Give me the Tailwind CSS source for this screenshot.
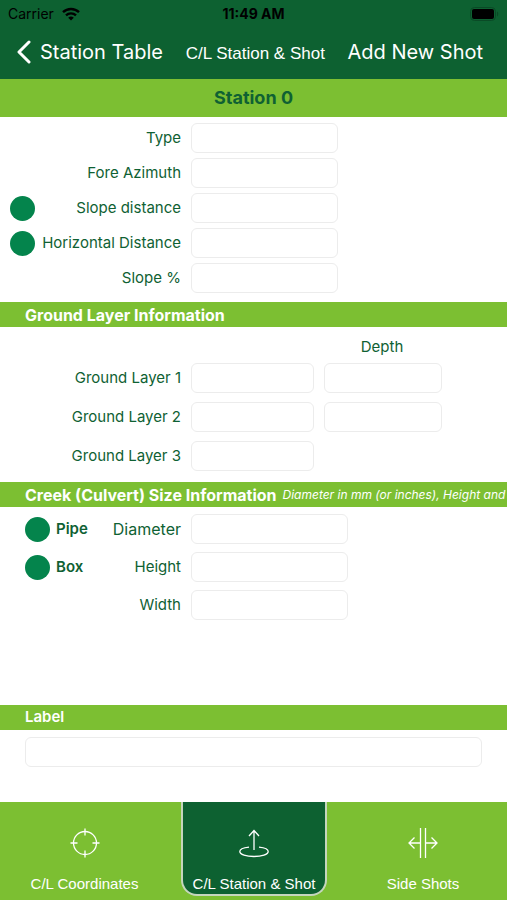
<!DOCTYPE html>
<html lang="en">
<head>
  <meta charset="UTF-8" />
  <meta name="viewport" content="width=device-width, initial-scale=1.0" />
  <title>C/L Station &amp; Shot</title>
  <script src="https://cdn.jsdelivr.net/npm/@tailwindcss/browser@4"></script>
</head>
<body class="min-h-screen flex flex-col bg-white text-[#0f6133] font-['Inter',sans-serif] text-[15px] overflow-x-hidden">

  <!-- Status bar + navigation -->
  <header class="bg-[#0d6131]">
    <div class="grid grid-cols-3 items-center h-7 pl-2 pr-2 text-sm leading-5 text-black">
      <div class="flex items-center gap-2">
        <span>Carrier</span>
        <svg class="w-[18px] h-[14px]" viewBox="0 0 18 14" fill="none" stroke="currentColor" stroke-width="2.4">
          <path d="M1 5.2a11.5 11.5 0 0 1 16 0" />
          <path d="M4 8.4a7.2 7.2 0 0 1 10 0" />
          <path d="M9 13.6L6.2 10.8a4 4 0 0 1 5.6 0z" fill="currentColor" stroke="none" />
        </svg>
      </div>
      <span class="text-center font-bold">11:49 AM</span>
      <svg class="w-[29px] h-[14px] justify-self-end" viewBox="0 0 29 14">
        <rect x="0.5" y="0.5" width="25" height="13" rx="4" fill="none" stroke="#0a4a26" />
        <rect x="2" y="2" width="22" height="10" rx="2" fill="#000" />
        <path d="M27 4.6c1.6.6 1.6 4.2 0 4.8z" fill="#0a4a26" />
      </svg>
    </div>
    <nav class="flex items-baseline justify-between h-[51px] pl-4 pr-6 pt-[10px] text-white">
      <a href="#" class="flex items-baseline gap-2 text-xl">
        <svg class="w-4 h-6 self-center" viewBox="0 0 16 24" fill="none" stroke="currentColor" stroke-width="3" stroke-linecap="round" stroke-linejoin="round">
          <path d="M13 2L3 12l10 10" />
        </svg>
        Station Table
      </a>
      <h1 class="font-['Liberation_Sans',sans-serif] text-[17px]">C/L Station &amp; Shot</h1>
      <button type="button" class="text-xl">Add New Shot</button>
    </nav>
  </header>

  <main class="flex-1">
    <h2 class="flex items-center justify-center h-[38px] bg-[#7cbf32] text-lg font-bold">Station 0</h2>

    <section class="flex flex-col gap-[5px] pt-[6px] pb-[9px]">
      <div class="flex items-center gap-[10px]">
        <label for="type" class="w-[181px] text-right">Type</label>
        <input id="type" type="text" class="w-[147px] h-[30px] px-2 rounded-md border border-[#ececec]" />
      </div>
      <div class="flex items-center gap-[10px]">
        <label for="azimuth" class="w-[181px] text-right">Fore Azimuth</label>
        <input id="azimuth" type="text" class="w-[147px] h-[30px] px-2 rounded-md border border-[#ececec]" />
      </div>
      <div class="flex items-center gap-[10px]">
        <div class="flex items-center justify-between w-[181px] pl-[10px]">
          <input type="radio" name="distance" aria-label="Use slope distance" class="appearance-none size-[25px] rounded-full bg-[#04844c]" />
          <label for="slopeDistance">Slope distance</label>
        </div>
        <input id="slopeDistance" type="text" class="w-[147px] h-[30px] px-2 rounded-md border border-[#ececec]" />
      </div>
      <div class="flex items-center gap-[10px]">
        <div class="flex items-center justify-between w-[181px] pl-[10px]">
          <input type="radio" name="distance" aria-label="Use horizontal distance" class="appearance-none size-[25px] rounded-full bg-[#04844c]" />
          <label for="horizontalDistance">Horizontal Distance</label>
        </div>
        <input id="horizontalDistance" type="text" class="w-[147px] h-[30px] px-2 rounded-md border border-[#ececec]" />
      </div>
      <div class="flex items-center gap-[10px]">
        <label for="slope" class="w-[181px] text-right">Slope %</label>
        <input id="slope" type="text" class="w-[147px] h-[30px] px-2 rounded-md border border-[#ececec]" />
      </div>
    </section>

    <h2 class="flex items-center h-[25px] pl-[25px] bg-[#7cbf32] text-white text-base font-bold">Ground Layer Information</h2>

    <section class="pt-[10px] pb-[11px]">
      <div class="w-[118px] ml-[323px] mb-[6px] text-center leading-5">Depth</div>
      <div class="flex flex-col gap-[9px]">
        <div class="flex items-center gap-[10px]">
          <label for="layer1" class="w-[181px] text-right">Ground Layer 1</label>
          <input id="layer1" type="text" class="w-[123px] h-[30px] px-2 rounded-md border border-[#ececec]" />
          <input type="text" aria-label="Ground Layer 1 depth" class="w-[118px] h-[30px] px-2 rounded-md border border-[#ececec]" />
        </div>
        <div class="flex items-center gap-[10px]">
          <label for="layer2" class="w-[181px] text-right">Ground Layer 2</label>
          <input id="layer2" type="text" class="w-[123px] h-[30px] px-2 rounded-md border border-[#ececec]" />
          <input type="text" aria-label="Ground Layer 2 depth" class="w-[118px] h-[30px] px-2 rounded-md border border-[#ececec]" />
        </div>
        <div class="flex items-center gap-[10px]">
          <label for="layer3" class="w-[181px] text-right">Ground Layer 3</label>
          <input id="layer3" type="text" class="w-[123px] h-[30px] px-2 rounded-md border border-[#ececec]" />
        </div>
      </div>
    </section>

    <h2 class="flex items-center gap-[6px] h-[25px] pl-[25px] bg-[#7cbf32] text-white text-base font-bold whitespace-nowrap overflow-hidden">
      Creek (Culvert) Size Information
      <span class="text-xs font-normal italic">Diameter in mm (or inches), Height and</span>
    </h2>

    <section class="flex flex-col gap-2 pt-[7px]">
      <div class="flex items-center gap-[10px]">
        <div class="flex items-center w-[181px] pl-[25px]">
          <input id="pipe" type="radio" name="culvert" class="appearance-none size-[25px] rounded-full bg-[#04844c]" />
          <label for="pipe" class="pl-[6px] font-semibold">Pipe</label>
          <label for="diameter" class="ml-auto text-base">Diameter</label>
        </div>
        <input id="diameter" type="text" class="w-[157px] h-[30px] px-2 rounded-md border border-[#ececec]" />
      </div>
      <div class="flex items-center gap-[10px]">
        <div class="flex items-center w-[181px] pl-[25px]">
          <input id="box" type="radio" name="culvert" class="appearance-none size-[25px] rounded-full bg-[#04844c]" />
          <label for="box" class="pl-[6px] font-semibold">Box</label>
          <label for="height" class="ml-auto">Height</label>
        </div>
        <input id="height" type="text" class="w-[157px] h-[30px] px-2 rounded-md border border-[#ececec]" />
      </div>
      <div class="flex items-center gap-[10px]">
        <label for="width" class="w-[181px] text-right">Width</label>
        <input id="width" type="text" class="w-[157px] h-[30px] px-2 rounded-md border border-[#ececec]" />
      </div>
    </section>

    <section class="mt-[85px]">
      <label for="label" class="flex items-center h-[25px] pl-[25px] bg-[#7cbf32] text-white font-semibold">Label</label>
      <div class="px-[25px] pt-[7px] pb-[35px]">
        <input id="label" type="text" class="block w-full h-[30px] px-2 rounded-md border border-[#ececec]" />
      </div>
    </section>
  </main>

  <!-- Tabs -->
  <nav class="grid grid-cols-[181fr_146fr_180fr] h-[98px] bg-[#7cbf32] text-white text-[15px] leading-5 font-['Liberation_Sans',sans-serif]">
    <a href="#" class="flex flex-col items-center pt-[26px] pr-3">
      <svg class="size-[30px]" viewBox="0 0 30 30" fill="none" stroke="currentColor" stroke-width="1.3">
        <circle cx="15" cy="15" r="11.5" />
        <path d="M15 0.5v7M15 22.5v7M0.5 15h7M22.5 15h7" />
      </svg>
      <span class="pt-4">C/L Coordinates</span>
    </a>
    <a href="#" aria-current="page" class="flex flex-col items-center h-[94px] pt-[26px] rounded-b-2xl border-2 border-t-0 border-[#c5d6bd] bg-[#0d6131]">
      <svg class="size-[30px]" viewBox="0 0 30 30" fill="none" stroke="currentColor" stroke-width="1.3">
        <path d="M15 22V3M10 8l5-5.500 5 5.500" />
        <path d="M10 19.2c-5 .5-9.200 2-9.200 4.300 0 3 6.500 5 14.200 5s14.200-2 14.200-5c0-2.300-4.200-3.800-9.200-4.300" />
      </svg>
      <span class="pt-4 whitespace-nowrap">C/L Station &amp; Shot</span>
    </a>
    <a href="#" class="flex flex-col items-center pt-[26px] pl-3">
      <svg class="size-[30px]" viewBox="0 0 30 30" fill="none" stroke="currentColor" stroke-width="1.3">
        <path d="M12.500 0v30M17.500 0v30" />
        <path d="M12.500 15H1M6.500 9.500L1 15l5.500 5.500M17.500 15H29M23.500 9.500L29 15l-5.500 5.500" />
      </svg>
      <span class="pt-4">Side Shots</span>
    </a>
  </nav>

</body>
</html>
